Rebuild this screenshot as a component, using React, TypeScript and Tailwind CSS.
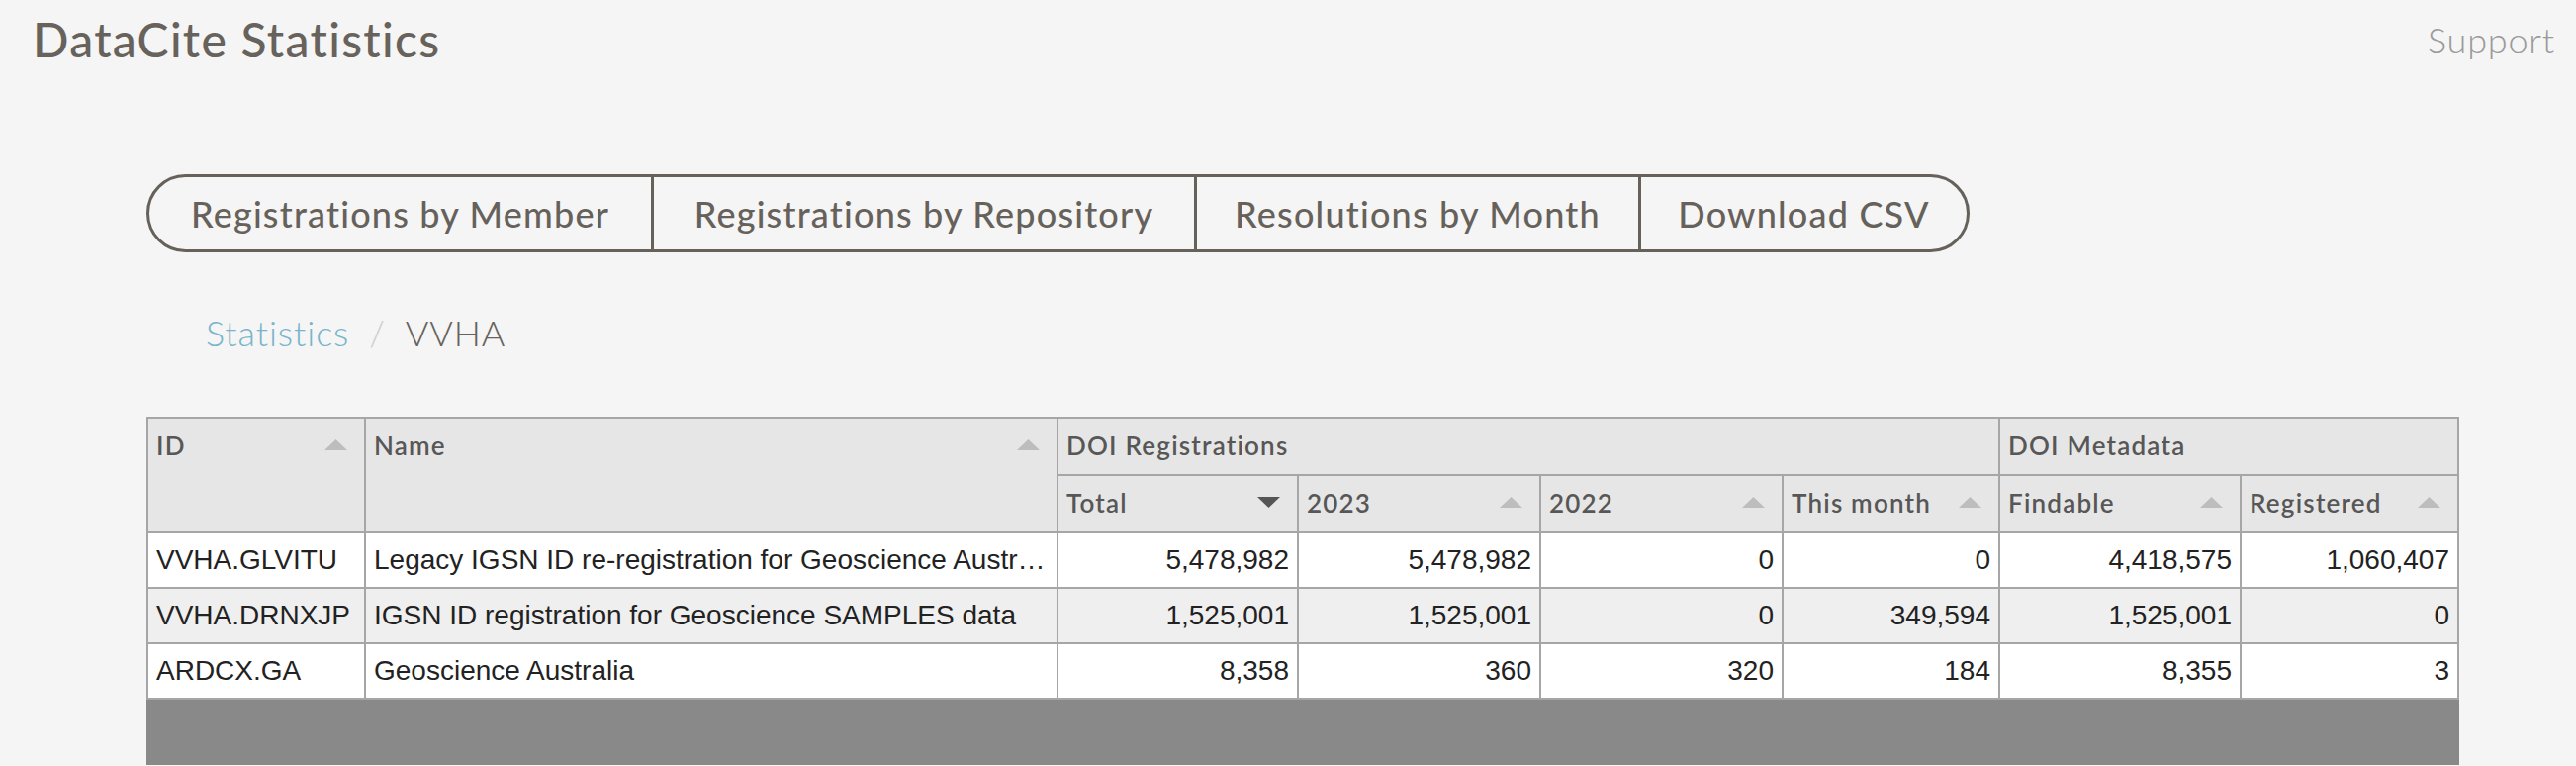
import React from "react";

const head = "font-['Lato',sans-serif]";
const body = "font-['Liberation_Sans',Arial,sans-serif]";

const TABS = [
  { label: "Registrations by Member", w: "w-[507px]" },
  { label: "Registrations by Repository", w: "w-[549px] border-l-[3px]" },
  { label: "Resolutions by Month", w: "w-[449px] border-l-[3px]" },
  { label: "Download CSV", w: "w-[332px] border-l-[3px]" },
];

const ROWS = [
  {
    id: "VVHA.GLVITU",
    name: "Legacy IGSN ID re-registration for Geoscience Australia",
    nums: ["5,478,982", "5,478,982", "0", "0", "4,418,575", "1,060,407"],
  },
  {
    id: "VVHA.DRNXJP",
    name: "IGSN ID registration for Geoscience SAMPLES data",
    nums: ["1,525,001", "1,525,001", "0", "349,594", "1,525,001", "0"],
  },
  {
    id: "ARDCX.GA",
    name: "Geoscience Australia",
    nums: ["8,358", "360", "320", "184", "8,355", "3"],
  },
];

function Arrow({ down = false }: { down?: boolean }) {
  return (
    <svg
      width="23"
      height="11"
      viewBox="0 0 23 11"
      className="absolute right-[17px] top-[21px]"
    >
      {down ? (
        <polygon points="0,0 23,0 11.5,11" fill="#555555" />
      ) : (
        <polygon points="0,11 23,11 11.5,0" fill="#bdbdbd" />
      )}
    </svg>
  );
}

const th =
  "relative border-2 border-[#a6a6a6] bg-[#e6e6e6] pl-2 pt-[12px] text-left align-top text-[26px] leading-[30px] font-semibold tracking-[1.2px] text-[#575757]";
const td = "border-2 border-[#a6a6a6] px-2 text-[28px] text-[#222222]";

export default function App() {
  return (
    <div className="min-h-screen bg-[#f4f5f4]">
      <header className="flex items-start justify-between">
        <h1
          className={`${head} mt-4 pl-[33px] text-[48px] leading-none font-medium tracking-[1.3px] text-[#67625c]`}
        >
          DataCite Statistics
        </h1>
        <a
          className={`${head} mt-[22px] pr-[21px] text-[36px] leading-none font-light tracking-[0.8px] text-[#9a9a9a]`}
        >
          Support
        </a>
      </header>

      <nav className="ml-[148px] mt-[112px] inline-flex h-[79px] overflow-hidden rounded-full border-[3px] border-[#66615b]">
        {TABS.map((t) => (
          <button
            key={t.label}
            className={`${head} ${t.w} flex items-center justify-center border-[#66615b] text-[36px] font-medium tracking-[1.2px] text-[#66615b]`}
          >
            {t.label}
          </button>
        ))}
      </nav>

      <div
        className={`${head} ml-[208px] mt-[63px] flex items-center gap-[20px] text-[36px] leading-none font-light tracking-[0.9px]`}
      >
        <span className="text-[#79b4cb]">Statistics</span>
        <span className="text-[#cccccc]">/</span>
        <span className="text-[#67625c]">VVHA</span>
      </div>

      <div className="ml-[148px] mt-[67px] w-[2338px]">
        <table className="w-[2338px] table-fixed border-collapse border-2 border-[#a0a0a0]">
          <colgroup>
            <col className="w-[220px]" />
            <col className="w-[700px]" />
            <col className="w-[243px]" />
            <col className="w-[245px]" />
            <col className="w-[245px]" />
            <col className="w-[219px]" />
            <col className="w-[244px]" />
            <col className="w-[220px]" />
          </colgroup>
          <thead className={head}>
            <tr className="h-[58px]">
              <th rowSpan={2} className={th}>
                ID
                <Arrow />
              </th>
              <th rowSpan={2} className={th}>
                Name
                <Arrow />
              </th>
              <th colSpan={4} className={th}>
                DOI Registrations
              </th>
              <th colSpan={2} className={th}>
                DOI Metadata
              </th>
            </tr>
            <tr className="h-[58px]">
              <th className={th}>
                Total
                <Arrow down />
              </th>
              <th className={th}>
                2023
                <Arrow />
              </th>
              <th className={th}>
                2022
                <Arrow />
              </th>
              <th className={th}>
                This month
                <Arrow />
              </th>
              <th className={th}>
                Findable
                <Arrow />
              </th>
              <th className={th}>
                Registered
                <Arrow />
              </th>
            </tr>
          </thead>
          <tbody className={body}>
            {ROWS.map((r, i) => (
              <tr
                key={r.id}
                className={`h-[56px] ${i % 2 === 1 ? "bg-[#efefef]" : "bg-white"}`}
              >
                <td className={`${td} whitespace-nowrap`}>{r.id}</td>
                <td className={`${td} overflow-hidden text-ellipsis whitespace-nowrap`}>
                  {r.name}
                </td>
                {r.nums.map((n, j) => (
                  <td key={j} className={`${td} text-right`}>
                    {n}
                  </td>
                ))}
              </tr>
            ))}
          </tbody>
        </table>
        <div className="h-[66px] bg-[#898989]" />
      </div>
    </div>
  );
}
